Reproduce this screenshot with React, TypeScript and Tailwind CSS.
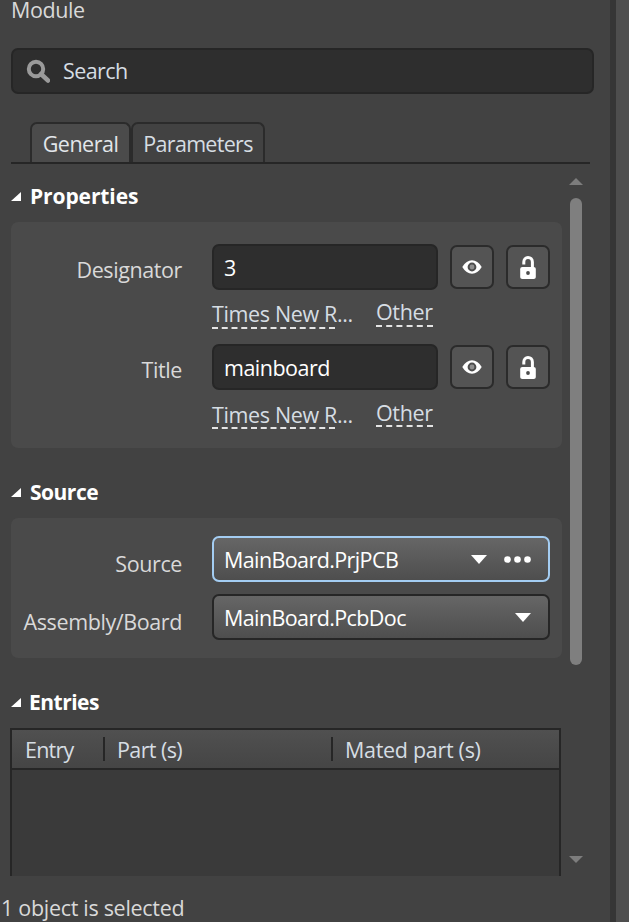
import React from "react";

const font = "font-['Open_Sans',sans-serif]";

function Eye() {
  return (
    <svg width="20" height="14" viewBox="0 0 20 14">
      <path d="M0.3 7C3 2.4 6.2 0.3 10 0.3S17 2.4 19.7 7C17 11.6 13.8 13.7 10 13.7S3 11.6 0.3 7Z" fill="#fff" />
      <circle cx="10" cy="7" r="3.4" fill="#8f8f8f" stroke="#4e4e4e" strokeWidth="2" />
    </svg>
  );
}

function Lock() {
  return (
    <svg width="16" height="23" viewBox="0 0 16 23">
      <path d="M3.8 8.6V6C3.8 3.2 5.6 1.5 8 1.5S12.4 3.2 12.4 6V12" fill="none" stroke="#fff" strokeWidth="3" />
      <path d="M2.4 11H13.6C15 11 15.8 11.8 15.8 13.2V20.8C15.8 22.2 15 23 13.6 23H2.4C1 23 .2 22.2 .2 20.8V13.2C.2 11.8 1 11 2.4 11Z" fill="#fff" />
      <circle cx="8" cy="17" r="1.9" fill="#4d4d4d" />
    </svg>
  );
}

function Caret({ className = "" }: { className?: string }) {
  return (
    <svg width="16" height="9" viewBox="0 0 16 9" className={className}>
      <path d="M0 0H16L8 9Z" fill="#fff" />
    </svg>
  );
}

function SectionHead({ title, className, textClass }: { title: string; className: string; textClass: string }) {
  return (
    <div className={`flex items-center h-[30px] ${className}`}>
      <svg width="11" height="11" viewBox="0 0 11 11" className="ml-[10px] mr-[9px] shrink-0">
        <path d="M11 1V10H1Z" fill="#fff" />
      </svg>
      <span className={`text-[21px] font-bold text-white leading-none ${textClass}`}>{title}</span>
    </div>
  );
}

function IconBtn({ children }: { children: React.ReactNode }) {
  return (
    <div className="w-[44px] h-[44px] rounded-[7px] border-2 border-[#2b2b2b] bg-[#545454] flex items-center justify-center">
      {children}
    </div>
  );
}

function FontLinks({ lower }: { lower?: boolean }) {
  return (
    <div className="flex items-start h-[54px] pl-[201px] text-[21.5px] tracking-[-0.35px] text-[#d6dde3] leading-[26px]">
      <div className={`w-[164px] relative whitespace-nowrap ${lower ? "pt-[12px]" : "pt-[11px]"}`}>
        Times New R...
        <div className="absolute left-0 top-[37px] w-[123px] border-b-2 border-dashed border-[#e4e4e4]" />
      </div>
      <div className={`relative ${lower ? "pt-[10px]" : "pt-[9px]"}`}>
        Other
        <div className="absolute left-0 top-[35px] w-full border-b-2 border-dashed border-[#e4e4e4]" />
      </div>
    </div>
  );
}

function PropRow({ label, value }: { label: string; value: string }) {
  return (
    <div className="flex items-center h-[46px]">
      <div className="w-[171px] mr-[30px] pt-[6px] text-right text-[21.5px] tracking-[-0.4px] text-[#d9d9d9]">{label}</div>
      <div className="w-[226px] h-[46px] rounded-[7px] border-2 border-[#262626] bg-[#2e2e2e] flex items-center pl-[10px] pt-[2px] text-[21.5px] tracking-[-0.5px] text-white">
        {value}
      </div>
      <div className="ml-[12px] flex gap-[12px]">
        <IconBtn><Eye /></IconBtn>
        <IconBtn><Lock /></IconBtn>
      </div>
    </div>
  );
}

function SelectRow({ label, value, focused }: { label: string; value: string; focused?: boolean }) {
  return (
    <div className="flex items-center h-[46px]">
      <div className="w-[171px] mr-[30px] text-right text-[21.5px] tracking-[-0.4px] text-[#d9d9d9] whitespace-nowrap pt-[10px]">{label}</div>
      <div
        className={`w-[338px] h-[46px] rounded-[7px] border-2 bg-gradient-to-b from-[#666666] to-[#4e4e4e] flex items-center pl-[10px] pr-[17px] text-[21.5px] tracking-[-0.6px] text-white ${
          focused ? "border-[#a4cdf2]" : "border-[#262626]"
        }`}
      >
        <span className="flex-1 pt-[2px]">{value}</span>
        {focused ? (
          <div className="flex items-center gap-[17px]">
            <Caret />
            <svg width="27" height="7" viewBox="0 0 27 7">
              <circle cx="3.5" cy="3.5" r="3.3" fill="#fff" />
              <circle cx="13.5" cy="3.5" r="3.3" fill="#fff" />
              <circle cx="23.5" cy="3.5" r="3.3" fill="#fff" />
            </svg>
          </div>
        ) : (
          <Caret />
        )}
      </div>
    </div>
  );
}

export default function App() {
  return (
    <div className={`${font} w-[629px] h-[922px] overflow-hidden bg-[#424242] flex`}>
      <div className="w-[610px] shrink-0 flex flex-col">
        <div className="h-[48px] pl-[11px] text-[21.5px] tracking-[-0.4px] text-[#d9d9d9] leading-[20px]">Module</div>

        <div className="ml-[11px] w-[583px] h-[46px] rounded-[7px] border-2 border-[#262626] bg-[#2e2e2e] flex items-center pl-[13px] gap-[13px]">
          <svg width="24" height="24" viewBox="0 0 24 24">
            <circle cx="10" cy="10" r="7.2" fill="none" stroke="#9a9a9a" strokeWidth="4" />
            <path d="M15 15L22 21.5" stroke="#9a9a9a" strokeWidth="4.5" strokeLinecap="round" />
          </svg>
          <span className="text-[21.5px] tracking-[-0.6px] text-[#d6dde3]">Search</span>
        </div>

        <div className="ml-[11px] mt-[28px] w-[579px] h-[42px] border-b-2 border-[#262626] flex pl-[19px]">
          <div className="w-[101px] h-[40px] rounded-t-[7px] border-2 border-b-0 border-[#2b2b2b] bg-[#4b4b4b] flex items-center justify-center pt-[2px] text-[21.5px] tracking-[-0.5px] text-[#e2e6ea]">
            General
          </div>
          <div className="w-[134px] h-[40px] rounded-t-[7px] border-2 border-b-0 border-[#2b2b2b] flex items-center justify-center pt-[2px] text-[21.5px] tracking-[-0.7px] text-[#d6dde3]">
            Parameters
          </div>
        </div>

        <div className="flex h-[712px]">
          <div className="w-[570px] h-[712px] overflow-hidden shrink-0">
            <SectionHead title="Properties" className="mt-[17px]" textClass="tracking-[-0.1px]" />
            <div className="ml-[11px] mt-[11px] w-[551px] h-[226px] rounded-[7px] bg-[#4a4a4a] pt-[22px]">
              <PropRow label="Designator" value="3" />
              <FontLinks />
              <PropRow label="Title" value="mainboard" />
              <FontLinks lower />
            </div>
            <SectionHead title="Source" className="mt-[29px]" textClass="tracking-[-0.5px]" />
            <div className="ml-[11px] mt-[11px] w-[551px] h-[140px] rounded-[7px] bg-[#4a4a4a] pt-[18px] flex flex-col gap-[12px]">
              <SelectRow label="Source" value="MainBoard.PrjPCB" focused />
              <SelectRow label="Assembly/Board" value="MainBoard.PcbDoc" />
            </div>
            <SectionHead title="Entries" className="mt-[29px]" textClass="tracking-[-0.5px] -ml-[1px]" />
            <div className="ml-[10px] mt-[11px] w-[551px] h-[170px] border-2 border-[#262626] bg-[#3a3a3a]">
              <div className="h-[40px] border-b-2 border-[#262626] bg-gradient-to-b from-[#505050] to-[#454545] flex items-center text-[21.5px] tracking-[-0.4px] text-[#d6dde3]">
                <div className="w-[91px] pl-[13px] pt-[2px] tracking-[-0.8px]">Entry</div>
                <div className="w-[228px] h-[24px] border-l-2 border-[#262626] pl-[12px] flex items-center pt-[2px] tracking-[-0.6px]">Part (s)</div>
                <div className="h-[24px] border-l-2 border-[#262626] pl-[12px] flex items-center pt-[2px] tracking-[-0.3px]">Mated part (s)</div>
              </div>
            </div>
          </div>
          <div className="w-[14px] -ml-[1px] flex flex-col items-center">
            <svg width="14" height="7" viewBox="0 0 14 7" className="mt-[14px] shrink-0">
              <path d="M7 0L14 7H0Z" fill="#7d7d7d" />
            </svg>
            <div className="mt-[13px] w-[12px] h-[467px] rounded-full bg-[#7f7f7f] shrink-0" />
            <svg width="14" height="7" viewBox="0 0 14 7" className="mt-[191px] shrink-0">
              <path d="M0 0H14L7 7Z" fill="#7d7d7d" />
            </svg>
          </div>
        </div>
        <div className="h-[46px] pl-[1px] pt-[18px] text-[21.5px] tracking-[-0.3px] text-[#d9d9d9] leading-[28px] whitespace-nowrap">1 object is selected</div>
      </div>
      <div className="w-[6px] bg-[#363636]" />
      <div className="flex-1 bg-[#4e4e4e]" />
    </div>
  );
}
